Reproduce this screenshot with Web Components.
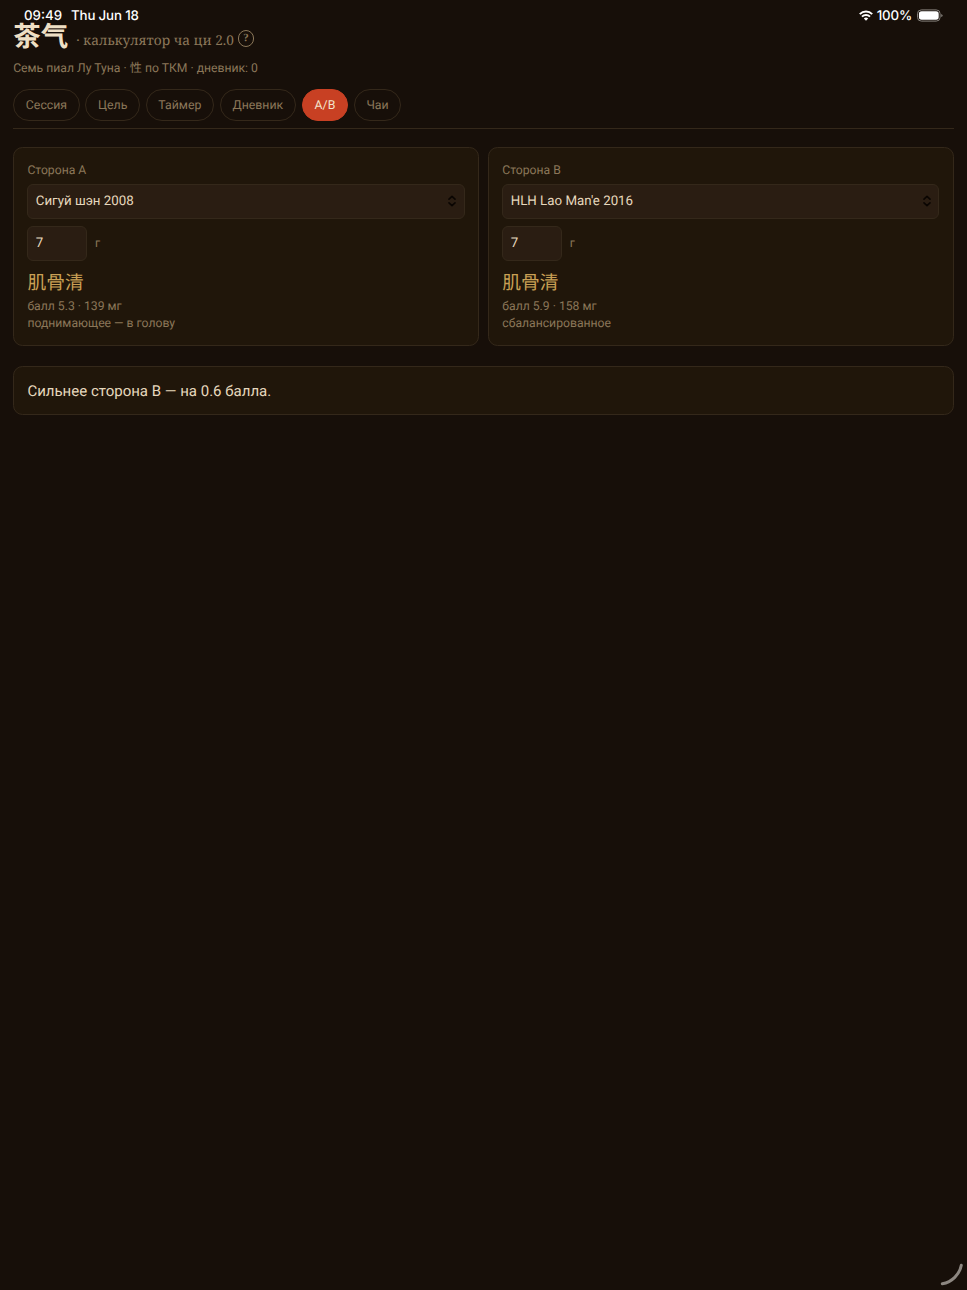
<!DOCTYPE html>
<html lang="ru">
<head>
<meta charset="utf-8">
<title>茶气 · калькулятор ча ци</title>
<style>
  html, body {
    margin: 0;
    background: #170f09;
  }

  body {
    --line: #34281a;
    --muted: #8b7759;
    --text: #e6d8bd;
    --gold: #c9a055;
    --card: #20160a;
    --field: #2a1d12;
    --accent: #c84023;
    height: 1290px;
    overflow: hidden;
    position: relative;
    color: var(--text);
    font-family: Roboto, "Noto Sans", "Noto Sans CJK SC", sans-serif;
    text-rendering: geometricPrecision;
  }
</style>
</head>
<body>
<tea-app></tea-app>

<script>
class BaseElement extends HTMLElement {
  constructor() {
    super();
    const template = document.createElement('template');
    template.innerHTML = this.constructor.markup;
    this.attachShadow({ mode: 'open' });
    this.shadowRoot.appendChild(template.content.cloneNode(true));
  }
}

class StatusBar extends BaseElement {
  static markup = `
    <style>
      :host {
        position: absolute;
        top: 0;
        left: 0;
        right: 0;
        height: 30px;
        padding: 0 24px;
        box-sizing: border-box;
        display: flex;
        align-items: center;
        justify-content: space-between;
        color: white;
        font: 500 13.3px/30px Inter, sans-serif;
        z-index: 2;
      }
      .group { display: flex; align-items: center; }
      span { padding-top: 1px; }
      .time { width: 47px; }
      .date { letter-spacing: -0.15px; }
      .wifi { margin-right: 4px; }
      .percent { letter-spacing: -0.15px; }
      .battery { margin-left: 5px; }
      svg { display: block; }
    </style>
    <div class="group">
      <span class="time">09:49</span>
      <span class="date">Thu Jun 18</span>
    </div>
    <div class="group">
      <svg class="wifi" width="14" height="11" viewBox="0 0 14 11">
        <g fill="none" stroke="white" stroke-width="2">
          <path d="M0.8 4.1a8.8 8.8 0 0 1 12.4 0"/>
          <path d="M3 6.6a5.7 5.7 0 0 1 8 0"/>
        </g>
        <path d="M7 10.7 4.8 8.5a3.1 3.1 0 0 1 4.4 0z" fill="white"/>
      </svg>
      <span class="percent">100%</span>
      <svg class="battery" width="26" height="13" viewBox="0 0 26 13">
        <rect x="0.5" y="0.9" width="22.6" height="11.2" rx="3.8" fill="none" stroke="#85807b"/>
        <rect x="1.9" y="2.3" width="19.8" height="8.4" rx="2.6" fill="white"/>
        <path d="M24.2 4.9q1.4.5 1.4 1.6t-1.4 1.6z" fill="#85807b"/>
      </svg>
    </div>
  `;
}

class TeaHeader extends BaseElement {
  static markup = `
    <style>
      :host { display: block; }
      h1 {
        margin: 0;
        height: 32px;
        display: flex;
        align-items: center;
        color: #efdfc4;
        font: 700 27.5px/32px "Noto Sans CJK SC", sans-serif;
      }
      .sub {
        margin: 11px 0 0 8px;
        color: var(--muted);
        font: 400 13.6px/20px "Noto Serif", "Liberation Serif", serif;
      }
      .help {
        margin: 9px 0 0 4px;
        width: 16.4px;
        height: 16.4px;
        box-sizing: border-box;
        border: 1px solid var(--muted);
        border-radius: 50%;
        color: var(--muted);
        text-align: center;
        font: 700 11px/14px "Liberation Serif", serif;
      }
      p {
        margin: 9px 0 0;
        color: var(--muted);
        font-size: 12.2px;
        line-height: 18px;
        white-space: nowrap;
      }
    </style>
    <h1>茶气<span class="sub">· калькулятор ча ци 2.0</span><span class="help">?</span></h1>
    <p>Семь пиал Лу Туна · 性 по ТКМ · дневник: 0</p>
  `;
}

class TeaTab extends BaseElement {
  static markup = `
    <style>
      :host {
        display: block;
        box-sizing: border-box;
        height: 32px;
        border: 1px solid var(--line);
        border-radius: 16px;
        color: var(--muted);
        font-size: 12.3px;
        line-height: 32.6px;
        text-align: center;
      }
      :host([active]) {
        background: var(--accent);
        border-color: var(--accent);
        color: #f3e4cc;
      }
    </style>
    <slot></slot>
  `;
}

class TeaTabs extends BaseElement {
  static markup = `
    <style>
      :host {
        display: flex;
        gap: 5.5px;
        margin-top: 12.4px;
        padding-bottom: 7px;
        border-bottom: 1px solid var(--line);
      }
    </style>
    <slot></slot>
  `;
}

class TeaCard extends BaseElement {
  static markup = `
    <style>
      :host {
        display: block;
        box-sizing: border-box;
        padding: 13px 13.2px;
        background: var(--card);
        border: 1px solid var(--line);
        border-radius: 9.5px;
      }
    </style>
    <slot></slot>
  `;
}

class TeaSide extends BaseElement {
  static markup = `
    <style>
      :host { display: block; }
      tea-card { height: 199px; }
      .label {
        color: var(--muted);
        font-size: 12.2px;
        line-height: 18px;
      }
      .field {
        box-sizing: border-box;
        height: 35px;
        padding: 0 7.4px;
        display: flex;
        align-items: center;
        background: var(--field);
        border: 1px solid var(--line);
        border-radius: 6px;
        font-size: 13.3px;
        line-height: 16px;
      }
      .grams, .tea { padding-top: 2px; }
      .select {
        margin-top: 5px;
        justify-content: space-between;
      }
      .weight {
        margin-top: 7px;
        display: flex;
        align-items: center;
        gap: 7.5px;
      }
      .weight .field { width: 60px; }
      .bowl {
        margin-top: 8px;
        color: var(--gold);
        font: 400 18.8px/26px "Noto Sans CJK SC", sans-serif;
      }
      .score { margin-top: 3.5px; }
      .score, .effect { line-height: 17px; }
    </style>
    <tea-card>
      <div class="label side"></div>
      <div class="field select">
        <span class="tea"></span>
        <svg width="8" height="12" viewBox="0 0 8 12" fill="none" stroke="#0a0502" stroke-width="1.6" stroke-linecap="round" stroke-linejoin="round">
          <path d="M1 4.2 4 1.4 7 4.2M1 7.8 4 10.6 7 7.8"/>
        </svg>
      </div>
      <div class="weight">
        <div class="field grams"></div>
        <span class="label">г</span>
      </div>
      <div class="bowl"></div>
      <div class="label score"></div>
      <div class="label effect"></div>
    </tea-card>
  `;

  connectedCallback() {
    ['side', 'tea', 'grams', 'bowl', 'score', 'effect'].forEach((name) => {
      this.shadowRoot.querySelector('.' + name).textContent = this.getAttribute(name) || '';
    });
  }
}

class CornerHandle extends BaseElement {
  static markup = `
    <style>
      :host {
        position: absolute;
        right: 0;
        bottom: 0;
        width: 30px;
        height: 30px;
      }
      svg { display: block; }
    </style>
    <svg width="30" height="30" viewBox="0 0 30 30">
      <path d="M24.3 5.3C22.5 14.5 15 22 5.3 23.8" fill="none" stroke="#8d8781" stroke-width="3" stroke-linecap="round"/>
    </svg>
  `;
}

class TeaApp extends BaseElement {
  static markup = `
    <style>
      :host {
        display: block;
        padding: 18px 13.4px 0 13.2px;
      }
      .sides {
        margin-top: 17.4px;
        display: grid;
        grid-template-columns: 1fr 1fr;
        gap: 9.4px;
      }
      .result {
        margin-top: 20.4px;
        height: 49px;
        padding-top: 0;
        padding-bottom: 0;
        font-size: 15px;
        line-height: 49px;
      }
    </style>
    <status-bar></status-bar>
    <tea-header></tea-header>
    <tea-tabs>
      <tea-tab style="width: 66.6px">Сессия</tea-tab>
      <tea-tab style="width: 54.9px">Цель</tea-tab>
      <tea-tab style="width: 68.4px">Таймер</tea-tab>
      <tea-tab style="width: 76.6px">Дневник</tea-tab>
      <tea-tab style="width: 46.6px" active>A/B</tea-tab>
      <tea-tab style="width: 47.6px">Чаи</tea-tab>
    </tea-tabs>
    <div class="sides">
      <tea-side side="Сторона A" tea="Сигуй шэн 2008" grams="7" bowl="肌骨清"
        score="балл 5.3 · 139 мг" effect="поднимающее — в голову"></tea-side>
      <tea-side side="Сторона B" tea="HLH Lao Man'e 2016" grams="7" bowl="肌骨清"
        score="балл 5.9 · 158 мг" effect="сбалансированное"></tea-side>
    </div>
    <tea-card class="result">Сильнее сторона B — на 0.6 балла.</tea-card>
    <corner-handle></corner-handle>
  `;
}

customElements.define('status-bar', StatusBar);
customElements.define('tea-header', TeaHeader);
customElements.define('tea-tab', TeaTab);
customElements.define('tea-tabs', TeaTabs);
customElements.define('tea-card', TeaCard);
customElements.define('tea-side', TeaSide);
customElements.define('corner-handle', CornerHandle);
customElements.define('tea-app', TeaApp);
</script>
</body>
</html>
